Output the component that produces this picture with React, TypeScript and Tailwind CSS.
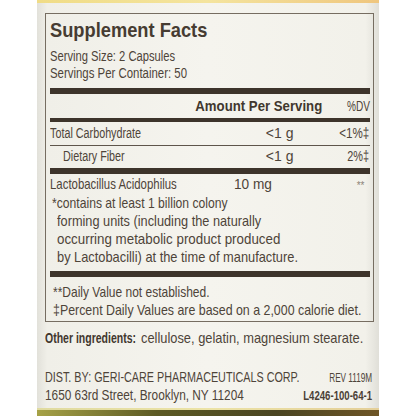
import React from "react";

function S({ children, className }: { children: React.ReactNode; className: string }) {
  return <span className={"inline-block whitespace-nowrap " + className}>{children}</span>;
}

export default function App() {
  return (
    <div className="w-[416px] h-[416px] bg-white flex overflow-hidden font-['Liberation_Sans',Arial,sans-serif] text-[#4e4439]">
      <div className="ml-[37px] w-[342px] h-full flex flex-col bg-[linear-gradient(to_right,#e2e1da_0%,#f0efe8_3%,#f5f4ee_50%,#f2f1ea_96%,#e0dfd8_100%)]">
        <div className="h-[3px] shrink-0 bg-[linear-gradient(to_right,#f0dc86,#f4e49e_50%,#efc67e)]" />
        <div className="ml-[8px] mt-[10px] w-[329px] border-[1.5px] border-[#766d61] px-[3.5px] pb-[2.5px] flex flex-col">
          <div className="mt-[4px] h-[24px] leading-[24px] text-[21px] font-bold text-[#463c32]">
            <S className="origin-left scale-x-[0.87]">Supplement Facts</S>
          </div>
          <div className="mt-[6px] h-[17px] leading-[17px] text-[14px]">
            <S className="origin-left scale-x-[0.8]">Serving Size: 2 Capsules</S>
          </div>
          <div className="h-[17px] leading-[17px] text-[14px]">
            <S className="origin-left scale-x-[0.815]">Servings Per Container: 50</S>
          </div>
          <div className="mt-[5.5px] h-[6.5px] bg-[#3d342b]" />
          <div className="h-[23px] leading-[23px] flex items-baseline">
            <div className="flex-1 min-w-0 text-right text-[15px] font-bold text-[#41372e]">
              <S className="origin-right scale-x-[0.88]">Amount Per Serving</S>
            </div>
            <div className="w-[47px] shrink-0 text-right text-[14px]">
              <S className="origin-right scale-x-[0.72]">%DV</S>
            </div>
          </div>
          <div className="mt-[0.5px] h-[4px] bg-[#3d342b]" />
          <div className="h-[24px] leading-[23px] border-b border-[#5e554b] flex items-baseline text-[14px]">
            <div className="flex-1 min-w-0">
              <S className="origin-left scale-x-[0.77]">Total Carbohydrate</S>
            </div>
            <div className="w-[80px] shrink-0 text-right">
              <S className="origin-right scale-x-[1]">&lt;1 g</S>
            </div>
            <div className="w-[76px] shrink-0 text-right">
              <S className="origin-right scale-x-[0.83]">&lt;1%‡</S>
            </div>
          </div>
          <div className="h-[21px] leading-[21px] flex items-baseline text-[14px] pl-[13px]">
            <div className="flex-1 min-w-0">
              <S className="origin-left scale-x-[0.77]">Dietary Fiber</S>
            </div>
            <div className="w-[78px] shrink-0 text-right">
              <S className="origin-right scale-x-[1]">&lt;1 g</S>
            </div>
            <div className="w-[76px] shrink-0 text-right">
              <S className="origin-right scale-x-[0.78]">2%‡</S>
            </div>
          </div>
          <div className="mt-[1px] h-[6px] bg-[#3d342b]" />
          <div className="h-[20px] leading-[20px] flex items-baseline text-[15px]">
            <div className="flex-1 min-w-0">
              <S className="origin-left scale-x-[0.76]">Lactobacillus Acidophilus</S>
            </div>
            <div className="w-[136px] shrink-0 flex items-baseline justify-between pr-[5px]">
              <S className="origin-left scale-x-[0.91]">10 mg</S>
              <S className="text-[10px] text-[#8d8479]">**</S>
            </div>
          </div>
          <div className="h-[18px] leading-[18px] text-[15px] pl-[2px]">
            <S className="origin-left scale-x-[0.81]">*contains at least 1 billion colony</S>
          </div>
          <div className="h-[18px] leading-[18px] text-[15px] pl-[7px]">
            <S className="origin-left scale-x-[0.85]">forming units (including the naturally</S>
          </div>
          <div className="h-[18px] leading-[18px] text-[15px] pl-[7px]">
            <S className="origin-left scale-x-[0.89]">occurring metabolic product produced</S>
          </div>
          <div className="h-[18px] leading-[18px] text-[15px] pl-[7px]">
            <S className="origin-left scale-x-[0.855]">by Lactobacilli) at the time of manufacture.</S>
          </div>
          <div className="mt-[5.5px] h-[6px] bg-[#3d342b]" />
          <div className="mt-[6px] h-[18px] leading-[18px] text-[15px] pl-[3px]">
            <S className="origin-left scale-x-[0.8]">**Daily Value not established.</S>
          </div>
          <div className="h-[17px] leading-[17px] text-[15px] pl-[3px]">
            <S className="origin-left scale-x-[0.826]">‡Percent Daily Values are based on a 2,000 calorie diet.</S>
          </div>
        </div>
        <div className="ml-[8px] mt-[7.5px] h-[18px] leading-[18px] text-[15px] flex items-baseline">
          <div className="w-[96px] shrink-0 font-bold text-[#41372e]">
            <S className="origin-left scale-x-[0.7]">Other ingredients:</S>
          </div>
          <div className="flex-1 min-w-0">
            <S className="origin-left scale-x-[0.857]">cellulose, gelatin, magnesium stearate.</S>
          </div>
        </div>
        <div className="ml-[8px] mt-[21px] w-[327px] h-[18px] leading-[18px] flex items-baseline">
          <div className="flex-1 min-w-0 text-[14px]">
            <S className="origin-left scale-x-[0.77]">DIST. BY: GERI-CARE PHARMACEUTICALS CORP.</S>
          </div>
          <div className="w-[75px] shrink-0 text-right text-[13px]">
            <S className="origin-right scale-x-[0.63]">REV 1119M</S>
          </div>
        </div>
        <div className="ml-[8px] w-[327px] h-[18px] leading-[18px] flex items-baseline">
          <div className="flex-1 min-w-0 text-[14.5px]">
            <S className="origin-left scale-x-[0.816]">1650 63rd Street, Brooklyn, NY 11204</S>
          </div>
          <div className="w-[90px] shrink-0 text-right text-[12px] font-bold text-[#4a4035]">
            <S className="origin-right scale-x-[0.8]">L4246-100-64-1</S>
          </div>
        </div>
        <div className="mt-auto h-[8px] shrink-0 flex flex-col">
          <div className="h-[2px] bg-[linear-gradient(to_right,#e0dba0,#ece3a6_50%,#e4cf98)]" />
          <div className="flex-1 bg-[linear-gradient(to_right,#a6a247,#5c5a24_35%,#4a4522_70%,#6e5526)]" />
        </div>
      </div>
    </div>
  );
}
